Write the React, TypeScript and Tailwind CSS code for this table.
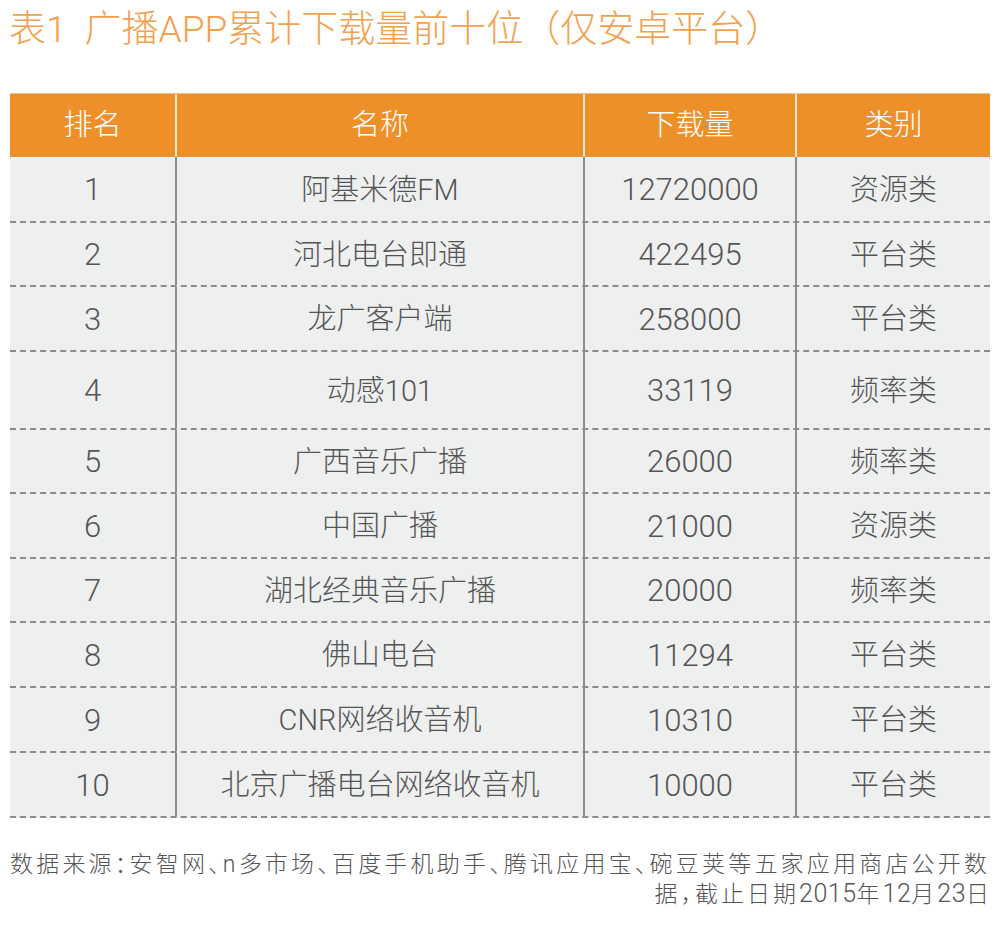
import React from "react";

type Row = { rank: string; name: string; downloads: string; category: string };

const rows: Row[] = [
  { rank: "1", name: "阿基米德FM", downloads: "12720000", category: "资源类" },
  { rank: "2", name: "河北电台即通", downloads: "422495", category: "平台类" },
  { rank: "3", name: "龙广客户端", downloads: "258000", category: "平台类" },
  { rank: "4", name: "动感101", downloads: "33119", category: "频率类" },
  { rank: "5", name: "广西音乐广播", downloads: "26000", category: "频率类" },
  { rank: "6", name: "中国广播", downloads: "21000", category: "资源类" },
  { rank: "7", name: "湖北经典音乐广播", downloads: "20000", category: "频率类" },
  { rank: "8", name: "佛山电台", downloads: "11294", category: "平台类" },
  { rank: "9", name: "CNR网络收音机", downloads: "10310", category: "平台类" },
  { rank: "10", name: "北京广播电台网络收音机", downloads: "10000", category: "平台类" },
];

// row 4 is taller in the source table
const heights = ["h-[66px]", "h-[64px]", "h-[65px]", "h-[78px]", "h-[64px]", "h-[65px]", "h-[64px]", "h-[65px]", "h-[65px]", "h-[65px]"];

const font = "font-['Roboto','Noto_Sans_CJK_SC',sans-serif] font-light";

export default function App() {
  return (
    <div className={`w-[999px] h-[929px] bg-white ${font}`}>
      <h1 className="pl-[9px] pt-[8px] h-[93px] text-[37px] leading-[44px] font-light text-[#f2a24f] whitespace-nowrap">
        表1&nbsp;&nbsp;广播APP累计下载量前十位（仅安卓平台）
      </h1>

      <div className="mx-[10px] w-[980px]">
        <div className="grid grid-cols-[165px_408px_212px_195px] h-[64px] bg-[#ee9029] text-white text-[29px] border-t border-[#f6c08a]">
          <div className="flex items-center justify-center">排名</div>
          <div className="flex items-center justify-center border-l-2 border-[#fde7cf]">名称</div>
          <div className="flex items-center justify-center border-l-2 border-[#fde7cf]">下载量</div>
          <div className="flex items-center justify-center border-l-2 border-[#fde7cf]">类别</div>
        </div>

        {rows.map((r, i) => (
          <div
            key={r.rank}
            className={`grid grid-cols-[165px_408px_212px_195px] ${heights[i]} bg-[#eeefef] text-[#555555] text-[29px] border-b-2 border-dashed border-[#8c8c8c]`}
          >
            <div className="flex items-center justify-center pt-[3px] text-[31px]">{r.rank}</div>
            <div className="flex items-center justify-center pt-[3px] border-l-2 border-solid border-[#8c8c8c]">{r.name}</div>
            <div className="flex items-center justify-center pt-[3px] border-l-2 border-solid border-[#8c8c8c] text-[31px]">{r.downloads}</div>
            <div className="flex items-center justify-center pt-[3px] border-l-2 border-solid border-[#8c8c8c]">{r.category}</div>
          </div>
        ))}
      </div>

      <div className="mx-[10px] w-[980px] mt-[32px] text-[23px] leading-[29px] tracking-[3px] text-[#555555] [font-feature-settings:'halt']">
        <p className="text-justify [text-align-last:justify] whitespace-nowrap">
          数据来源：安智网、n多市场、百度手机助手、腾讯应用宝、碗豆荚等五家应用商店公开数
        </p>
        <p className="text-right -mr-[2px]">
          据，截止日期<span className="text-[25px] tracking-[0.5px]">2015</span>年
          <span className="text-[25px] tracking-[0.5px]">12</span>月
          <span className="text-[25px] tracking-[0.5px]">23</span>日
        </p>
      </div>
    </div>
  );
}
